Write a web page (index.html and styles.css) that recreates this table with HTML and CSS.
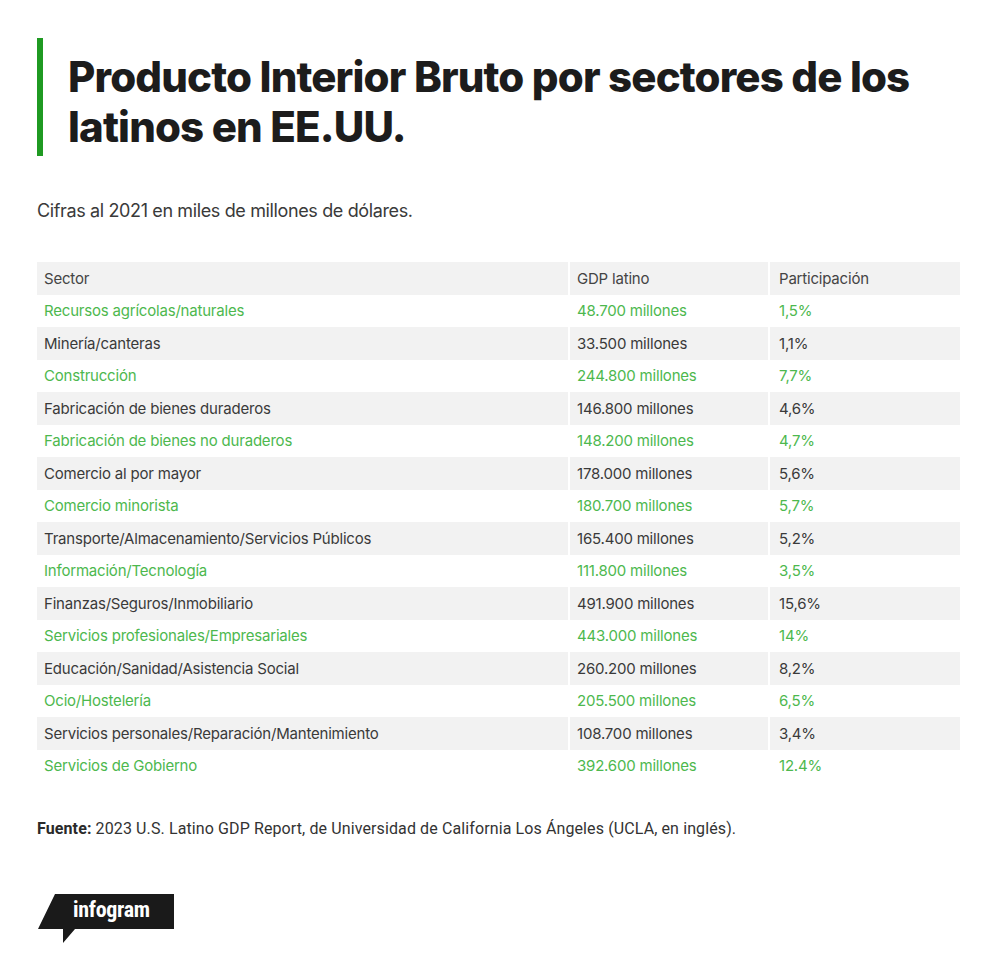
FILE: index.html
```html
<!DOCTYPE html>
<html lang="es">
<head>
<meta charset="utf-8">
<title>Producto Interior Bruto por sectores de los latinos en EE.UU.</title>
<link rel="stylesheet" href="styles.css">
</head>
<body>
<main class="page">
  <h1 class="title">Producto Interior Bruto por sectores de los latinos en EE.UU.</h1>
  <p class="subtitle">Cifras al 2021 en miles de millones de dólares.</p>

  <div class="table">
    <div class="row head"><div>Sector</div><div>GDP latino</div><div>Participación</div></div>
    <div class="row g"><div>Recursos agrícolas/naturales</div><div>48.700 millones</div><div>1,5%</div></div>
    <div class="row s"><div>Minería/canteras</div><div>33.500 millones</div><div>1,1%</div></div>
    <div class="row g"><div>Construcción</div><div>244.800 millones</div><div>7,7%</div></div>
    <div class="row s"><div>Fabricación de bienes duraderos</div><div>146.800 millones</div><div>4,6%</div></div>
    <div class="row g"><div>Fabricación de bienes no duraderos</div><div>148.200 millones</div><div>4,7%</div></div>
    <div class="row s"><div>Comercio al por mayor</div><div>178.000 millones</div><div>5,6%</div></div>
    <div class="row g"><div>Comercio minorista</div><div>180.700 millones</div><div>5,7%</div></div>
    <div class="row s"><div>Transporte/Almacenamiento/Servicios Públicos</div><div>165.400 millones</div><div>5,2%</div></div>
    <div class="row g"><div>Información/Tecnología</div><div>111.800 millones</div><div>3,5%</div></div>
    <div class="row s"><div>Finanzas/Seguros/Inmobiliario</div><div>491.900 millones</div><div>15,6%</div></div>
    <div class="row g"><div>Servicios profesionales/Empresariales</div><div>443.000 millones</div><div>14%</div></div>
    <div class="row s"><div>Educación/Sanidad/Asistencia Social</div><div>260.200 millones</div><div>8,2%</div></div>
    <div class="row g"><div>Ocio/Hostelería</div><div>205.500 millones</div><div>6,5%</div></div>
    <div class="row s"><div>Servicios personales/Reparación/Mantenimiento</div><div>108.700 millones</div><div>3,4%</div></div>
    <div class="row g"><div>Servicios de Gobierno</div><div>392.600 millones</div><div>12.4%</div></div>
  </div>

  <p class="source"><b>Fuente:</b> 2023 U.S. Latino GDP Report, de Universidad de California Los Ángeles (UCLA, en inglés).</p>

  <div class="logo">
    <svg class="logo-shape" width="140" height="52" viewBox="0 0 140 52" aria-hidden="true">
      <polygon points="18,0 137,0 137,35 38,35 26,49 26,35 1,35" fill="#1a1a1a"/>
    </svg>
    <span class="logo-text">infogram</span>
  </div>
</main>
</body>
</html>
```

FILE: styles.css
```css
* { box-sizing: border-box; }

html, body {
  margin: 0;
  padding: 0;
  background: #ffffff;
}

.page {
  padding: 38px 40px 0 37px;
  width: 1000px;
  font-family: Inter, "Liberation Sans", sans-serif;
  color: #3a3a3a;
}

.title {
  margin: 0;
  border-left: 6px solid #1f9a22;
  padding: 14px 0 4px 25px;
  font-size: 42px;
  line-height: 50px;
  font-weight: 800;
  letter-spacing: -0.85px;
  color: #1c1c1c;
  width: 920px;
}

.subtitle {
  margin: 43px 0 0 0;
  font-size: 18px;
  line-height: 24px;
  letter-spacing: -0.37px;
  color: #3a3a3a;
}

.table {
  margin-top: 39px;
  width: 923px;
  font-size: 15px;
  letter-spacing: -0.2px;
}

.row {
  display: grid;
  grid-template-columns: 531px 198px 190px;
  column-gap: 2px;
  height: 32.5px;
}

.row > div {
  display: flex;
  align-items: center;
  padding-left: 7px;
  white-space: nowrap;
}

.row > div:nth-child(3) { padding-left: 9px; }

.head > div,
.s > div { background: #f2f2f2; }

.head > div { color: #444444; }

.g > div { color: #4db84e; }

.s > div { color: #3a3a3a; }

.source {
  margin: 37px 0 0 0;
  font-family: Roboto, "Liberation Sans", sans-serif;
  font-size: 16px;
  line-height: 20px;
  letter-spacing: 0.11px;
  color: #333333;
}

.source b { font-weight: 700; color: #2a2a2a; }

.logo {
  position: relative;
  margin-top: 55px;
  width: 140px;
  height: 52px;
}

.logo-shape { display: block; }

.logo-text {
  position: absolute;
  left: 36px;
  top: 3px;
  font-family: "Roboto Condensed", "Liberation Sans Narrow", "DejaVu Sans Condensed", sans-serif;
  font-stretch: condensed;
  font-weight: 700;
  font-size: 22px;
  line-height: 26px;
  color: #ffffff;
  letter-spacing: -0.3px;
}
```
